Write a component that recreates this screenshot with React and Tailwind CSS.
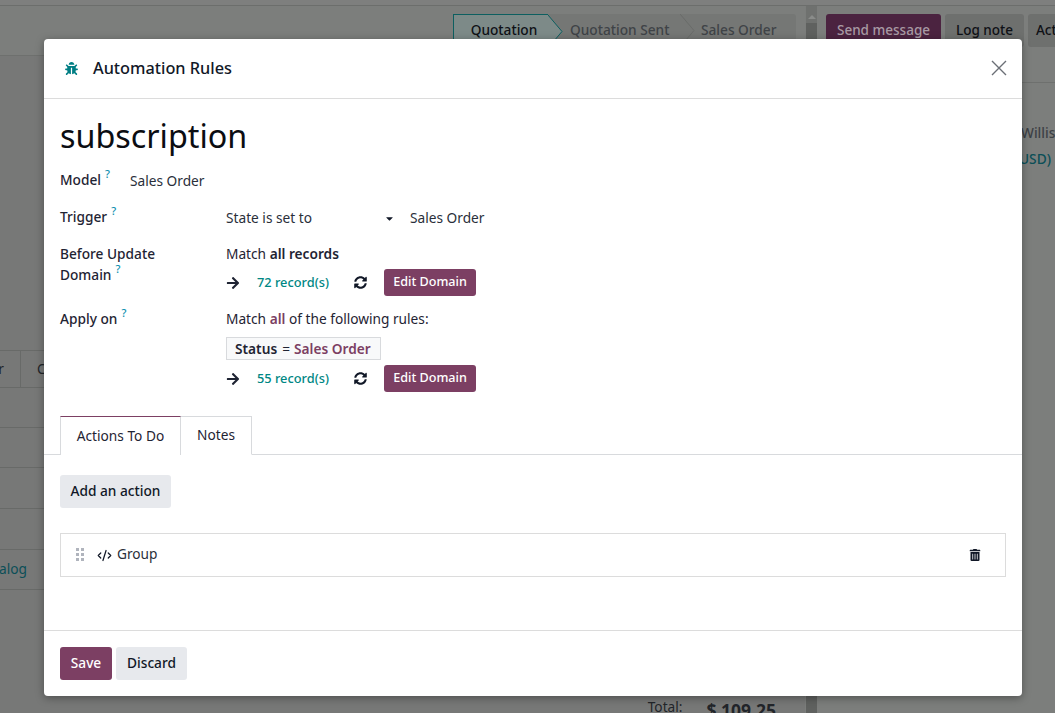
import React from 'react';
import { CodeXml } from 'lucide-react';
import { FaBug, FaSyncAlt, FaArrowRight, FaTrashAlt, FaCaretDown } from 'react-icons/fa';

const Help = () => <sup className="ml-1 text-[11px] font-medium text-[#0e8fb0] top-[-7px]">?</sup>;

const Chevron = ({ stroke, fill }) => (
    <svg className="absolute right-[-15px] top-0 z-10" width="15" height="33" viewBox="0 0 15 33">
        <path d="M0 0 L14 16.5 L0 33" fill={fill} stroke={stroke} strokeWidth="1" />
    </svg>
);

const RecordRow = ({ count }) => (
    <div className="flex items-center h-[27px]">
        <FaArrowRight size={14} className="w-[14px] text-[#1f2433]" />
        <span className="ml-[17px] w-[97px] text-[12.8px] font-medium text-[#008784]">{count} record(s)</span>
        <FaSyncAlt size={13} className="text-[#111827]" />
        <button className="ml-[17px] h-[27px] w-[92px] rounded-[3px] bg-[#7c3f63] text-[12.6px] font-medium text-white">Edit Domain</button>
    </div>
);

const App = () => {
    return (
        <div className="relative h-[713px] w-[1055px] overflow-hidden bg-[#7b7d7b] font-['Noto_Sans',sans-serif] text-[13.7px] text-[#1f2433]">
            {/* dimmed page behind the dialog */}
            <div className="h-[6px] border-b border-[#6c6e6c] bg-[#7e7f7e]"></div>
            <div className="flex h-[707px]">
                <div className="w-[805px] shrink-0 bg-[#777877]">
                    <div className="flex h-[50px] justify-end border-b border-[#6e706e] bg-[#7c7e7c] pt-[8px] pr-[9px]">
                        <div className="flex h-[33px] w-[343px] rounded-[3px] bg-[#757775] font-medium text-[#3f4347]">
                            <div className="relative flex w-[95px] items-center justify-center border border-r-0 border-[#0d5f60] bg-[#7d8a88] pl-[6px] text-[#0f1116]">
                                Quotation
                                <Chevron stroke="#0d5f60" fill="#7d8a88" />
                            </div>
                            <div className="relative flex w-[132px] items-center pl-[22px]">
                                Quotation Sent
                                <Chevron stroke="#6a6c6a" fill="#757775" />
                            </div>
                            <div className="flex flex-1 items-center pl-[21px]">Sales Order</div>
                        </div>
                    </div>
                    <div className="h-[294px]"></div>
                    <div className="flex h-[38px] items-center border-y border-[#686a68]">
                        <div className="flex h-full w-[21px] items-center justify-end border-r border-[#686a68] pr-[16px] text-[#22252a]">r</div>
                        <div className="pl-[16px] text-[#22252a]">C</div>
                    </div>
                    <div className="h-[40px] border-b border-[#686a68]"></div>
                    <div className="h-[40px] border-b border-[#686a68]"></div>
                    <div className="h-[41px] border-b border-[#686a68]"></div>
                    <div className="h-[41px] border-b border-[#686a68]"></div>
                    <div className="flex h-[40px] w-full items-center border-b border-[#686a68]">
                        <div className="flex w-[27px] justify-end overflow-hidden whitespace-nowrap pb-[1px] text-[#0b4f57]">Catalog</div>
                    </div>
                    <div className="flex justify-end pt-[107px] pr-[29px] text-[#22252a]">
                        <span>Total:</span>
                        <span className="ml-[24px] text-[17.5px] font-bold">$ 109.25</span>
                    </div>
                </div>
                <div className="ml-[1px] flex w-[11px] flex-col items-center bg-[#6f716f] pt-[9px]">
                    <div className="h-0 w-0 border-x-[4px] border-b-[4px] border-x-transparent border-b-[#8a8c8a]"></div>
                    <div className="mt-[4px] h-[690px] w-full bg-[#5f615f]"></div>
                </div>
                <div className="min-w-0 flex-1 overflow-hidden bg-[#7c7e7c]">
                    <div className="flex h-[77px] gap-[4px] whitespace-nowrap border-b border-[#6e706e] pt-[8px] pl-[9px] font-medium">
                        <button className="h-[33px] w-[115px] shrink-0 rounded-[3px] bg-[#4b2340] text-[13.5px] text-[#a89aa4]">Send message</button>
                        <button className="h-[33px] w-[79px] shrink-0 rounded-[3px] bg-[#6e706e] text-[13.5px] text-[#0f1116]">Log note</button>
                        <button className="h-[33px] w-[60px] shrink-0 rounded-[3px] bg-[#6e706e] pl-[8px] text-left text-[13.5px] text-[#0f1116]">Activities</button>
                    </div>
                    <div className="whitespace-nowrap pt-[40px] pl-[204px] font-medium">
                        <div className="text-[#3c4146]">Willis</div>
                    </div>
                    <div className="whitespace-nowrap pt-[5px] pl-[202px] font-medium text-[#0b4f57]">USD)</div>
                </div>
            </div>

            {/* dialog */}
            <div className="absolute inset-0 z-20 pt-[39px] pl-[44px]">
                <div className="flex h-[657px] w-[978px] flex-col rounded-[4px] bg-white shadow-[0_2px_8px_rgba(0,0,0,0.35)]">
                    <div className="flex h-[60px] shrink-0 items-center border-b border-[#dcdcdc] pl-[21px] pr-[15px]">
                        <FaBug size={13} className="text-[#017e84]" />
                        <h4 className="ml-[15px] text-[16.3px] font-medium text-[#111827]">Automation Rules</h4>
                        <svg className="ml-auto mb-[2px]" width="16" height="16" viewBox="0 0 16 16">
                            <path d="M1 1 L15 15 M15 1 L1 15" stroke="#6b6f76" strokeWidth="1.4" fill="none" />
                        </svg>
                    </div>

                    <div className="flex-1">
                        <div className="px-[16px] pt-[12px]">
                            <h1 className="h-[50px] text-[32.3px] leading-[48px] text-[#0b0d12]">subscription</h1>
                            <div className="mt-[10px] flex h-[20px] items-center">
                                <label className="mt-[-2px] w-[70px] font-medium">Model<Help /></label>
                                <span className="text-[#2a2f3a]">Sales Order</span>
                            </div>
                            <div className="mt-[17px] flex h-[20px] items-center">
                                <label className="mt-[-1px] w-[166px] font-medium">Trigger<Help /></label>
                                <span className="w-[158px] text-[#2a2f3a]">State is set to</span>
                                <FaCaretDown size={11} className="text-[#111827]" />
                                <span className="ml-[15px] text-[#2a2f3a]">Sales Order</span>
                            </div>
                            <div className="mt-[16px] flex">
                                <label className="mt-[-1px] w-[166px] font-medium leading-[21px]">Before Update<br />Domain<Help /></label>
                                <div>
                                    <div className="h-[20px] leading-[20px]">Match <b className="font-semibold">all records</b></div>
                                    <div className="mt-[5px]"><RecordRow count={72} /></div>
                                </div>
                            </div>
                            <div className="mt-[13px] flex">
                                <label className="w-[166px] font-medium leading-[20px]">Apply on<Help /></label>
                                <div>
                                    <div className="h-[20px] leading-[20px]">Match <b className="font-semibold text-[#7c3f63]">all</b> of the following rules:</div>
                                    <div className="mt-[8px] flex h-[23px] w-[155px] items-center border border-[#d8dadd] bg-[#f8f9fa] pl-[8px] pt-[2px]">
                                        <b className="font-semibold">Status</b>
                                        <span className="ml-[5px]">=</span>
                                        <b className="ml-[4px] font-semibold text-[#7c3f63]">Sales Order</b>
                                    </div>
                                    <div className="mt-[5px]"><RecordRow count={55} /></div>
                                </div>
                            </div>
                        </div>

                        <div className="mt-[24px] flex h-[39px] border-b border-[#d8dadd] pl-[16px]">
                            <div className="mb-[-1px] flex w-[121px] items-center justify-center border border-b-0 border-[#d8dadd] border-t-[#7c3f63] bg-white">Actions To Do</div>
                            <div className="mb-[-1px] flex w-[71px] items-center justify-center border border-b-white border-l-0 border-[#d8dadd] bg-white">Notes</div>
                        </div>

                        <div className="px-[16px] pt-[20px]">
                            <button className="h-[33px] w-[111px] rounded-[3px] bg-[#e7e9ed] font-medium text-[#111827]">Add an action</button>
                            <div className="mt-[25px] flex h-[44px] items-center border border-[#dcdcdc] pl-[15px] pr-[24px]">
                                <div className="mb-[2px] grid grid-cols-2 gap-[2px]">
                                    <i className="h-[3px] w-[3px] bg-[#b0b4bd]"></i><i className="h-[3px] w-[3px] bg-[#b0b4bd]"></i>
                                    <i className="h-[3px] w-[3px] bg-[#b0b4bd]"></i><i className="h-[3px] w-[3px] bg-[#b0b4bd]"></i>
                                    <i className="h-[3px] w-[3px] bg-[#b0b4bd]"></i><i className="h-[3px] w-[3px] bg-[#b0b4bd]"></i>
                                </div>
                                <CodeXml size={15} strokeWidth={2} className="ml-[13px] text-[#111827]" />
                                <span className="ml-[5px] pb-[1px] text-[#2a2f3a]">Group</span>
                                <FaTrashAlt size={12} className="ml-auto text-[#111827]" />
                            </div>
                        </div>
                    </div>

                    <div className="flex h-[66px] shrink-0 gap-[4px] border-t border-[#dcdcdc] pl-[16px] pt-[16px]">
                        <button className="h-[33px] w-[52px] rounded-[3px] bg-[#7c3f63] font-medium text-white">Save</button>
                        <button className="h-[33px] w-[71px] rounded-[3px] bg-[#e7e9ed] font-medium text-[#111827]">Discard</button>
                    </div>
                </div>
            </div>
        </div>
    );
};

export default App;
